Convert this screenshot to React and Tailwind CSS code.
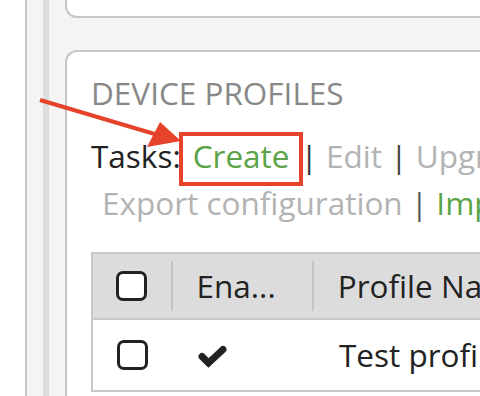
import React from 'react';

const Checkbox = () => (
  <div className="w-[31px] h-[30px] rounded-[7px] border-[3px] border-[#222] bg-white" />
);

const Check = () => (
  <svg width="32" height="26" viewBox="196 342 32 26">
    <polyline points="202,356.5 208.5,363 223,349.5" fill="none" stroke="#222" strokeWidth="7" strokeLinecap="round" strokeLinejoin="miter" />
  </svg>
);

export default function App() {
  return (
    <div className="relative w-[480px] h-[396px] overflow-hidden bg-white flex font-['Open_Sans',sans-serif]">
      <div className="w-[25px] shrink-0 bg-white" />
      <div className="flex flex-1 border-l-2 border-[#c6c6c6] bg-[#f4f4f4]">
        <div className="w-[16px] shrink-0" />
        <div className="w-[6px] shrink-0 bg-[#dddddd]" />
        <div className="w-[16px] shrink-0" />
        <div className="flex flex-1 flex-col">
          <div className="h-[18px] shrink-0 bg-white border-l-2 border-b-2 border-[#c6c6c6] rounded-bl-[12px]" />
          <div className="h-[32px] shrink-0" />
          <div className="flex-1 bg-white border-l-2 border-t-2 border-[#c6c6c6] rounded-tl-[12px] pl-[24px] pt-[21px]">
            <div className="text-[31.5px] leading-[40px] text-[#888888] whitespace-nowrap">DEVICE PROFILES</div>
            <div className="mt-[19px] text-[31.5px] leading-[48px] whitespace-nowrap text-[#222]">
              <span>Tasks:</span>
              <span className="inline-block -ml-[2px] border-[4px] border-[#e5432a] pl-[10px] pr-[9px] pb-[6px] leading-[40px] -mb-[8px]">
                <span className="text-[#5aa346]">Create</span>
              </span>
              <span className="text-[#333] -ml-[2px]">|</span>
              <span className="text-[#b3b3b3]"> Edit </span>
              <span className="text-[#444]">|</span>
              <span className="text-[#b3b3b3]"> Upgrade</span>
            </div>
            <div className="pl-[11px] text-[31.5px] leading-[46px] whitespace-nowrap">
              <span className="text-[#b3b3b3]">Export configuration </span>
              <span className="text-[#555]">|</span>
              <span className="text-[#5aa346]"> Import</span>
            </div>
            <div className="mt-[26px] border-2 border-[#c8c8c8] w-[440px] text-[31.5px] text-[#222]">
              <div className="flex h-[66px] items-center bg-[#dcdcdc] border-b-2 border-[#c8c8c8]">
                <div className="w-[78px] flex justify-center"><Checkbox /></div>
                <div className="w-[2px] h-[50px] bg-[#c4c4c4]" />
                <div className="w-[140px] pl-[24px] whitespace-nowrap">Ena...</div>
                <div className="w-[2px] h-[50px] bg-[#c4c4c4]" />
                <div className="pl-[24px] whitespace-nowrap">Profile Name</div>
              </div>
              <div className="flex h-[70px] items-center bg-white">
                <div className="w-[78px] flex justify-center"><Checkbox /></div>
                <div className="w-[2px]" />
                <div className="w-[140px] pl-[23px] flex"><Check /></div>
                <div className="w-[2px]" />
                <div className="pl-[24px] whitespace-nowrap">Test profile</div>
              </div>
            </div>
          </div>
        </div>
      </div>
      <svg className="absolute left-0 top-0" width="480" height="396">
        <line x1="40" y1="100" x2="158" y2="135" stroke="#e5432a" strokeWidth="4" />
        <polygon points="160,122 147,147 181,141" fill="#e5432a" />
      </svg>
    </div>
  );
}
